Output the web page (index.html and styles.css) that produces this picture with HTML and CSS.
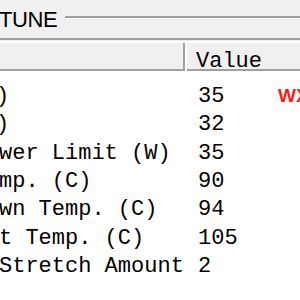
FILE: index.html
```html
<!DOCTYPE html>
<html>
<head>
<meta charset="utf-8">
<link rel="stylesheet" href="styles.css">
</head>
<body>
<div class="group">
  <div class="group-head">
    <span class="caption">TUNE</span>
    <span class="etch"></span>
  </div>
  <div class="list">
    <div class="list-header">
      <div class="hcell hcell-name"></div>
      <div class="hcell hcell-value">Value</div>
    </div>
    <div class="list-body">
      <div class="row"><span class="name name-paren">)</span><span class="value">35</span><span class="flag">WX</span></div>
      <div class="row"><span class="name name-paren">)</span><span class="value">32</span><span class="flag"></span></div>
      <div class="row"><span class="name">wer Limit (W)</span><span class="value">35</span><span class="flag"></span></div>
      <div class="row"><span class="name">mp. (C)</span><span class="value">90</span><span class="flag"></span></div>
      <div class="row"><span class="name">wn Temp. (C)</span><span class="value">94</span><span class="flag"></span></div>
      <div class="row"><span class="name">t Temp. (C)</span><span class="value">105</span><span class="flag"></span></div>
      <div class="row"><span class="name">Stretch Amount</span><span class="value">2</span><span class="flag"></span></div>
    </div>
  </div>
</div>
</body>
</html>
```
FILE: styles.css
```css
html, body {
  margin: 0;
  padding: 0;
}
body {
  width: 300px;
  height: 300px;
  overflow: hidden;
  background: #f0f0f0;
}
.group {
  display: flex;
  flex-direction: column;
  height: 300px;
}
.group-head {
  display: flex;
  align-items: flex-start;
  height: 38px;
}
.caption {
  font-family: "Liberation Sans", Arial, sans-serif;
  font-size: 22px;
  line-height: 22px;
  padding-top: 9px;
  margin-left: -1px;
  letter-spacing: -0.4px;
  color: #000;
}
.etch {
  flex: 1;
  margin-left: 8px;
  margin-top: 16px;
  height: 0;
  border-top: 2px solid #a0a0a0;
  border-bottom: 1px solid #ffffff;
}
.list {
  flex: 1;
  display: flex;
  flex-direction: column;
  border-top: 2px solid #a0a0a0;
  font-family: "Liberation Mono", "Courier New", monospace;
  font-size: 22px;
  color: #000;
}
.list-header {
  display: flex;
  border-top: 1px solid #f0f0f0;
  border-bottom: 2px solid #a0a0a0;
  box-shadow: inset 0 1px 0 #ffffff, inset 0 2px 0 #ffffff;
  height: 31px;
  box-sizing: border-box;
  padding-top: 2px;
}
.hcell {
  height: 29px;
  box-sizing: border-box;
}
.hcell-name {
  width: 185px;
  border-right: 2px solid #a0a0a0;
}
.hcell-value {
  flex: 1;
  border-left: 2px solid #ffffff;
  padding: 8px 0 0 9px;
  line-height: 22px;
}
.list-body {
  flex: 1;
  background: #ffffff;
  padding-top: 12px;
}
.row {
  display: grid;
  grid-template-columns: 189px 89px 1fr;
  height: 28.33px;
  line-height: 28.33px;
  white-space: nowrap;
}
.name {
  overflow: hidden;
  margin-left: -1px;
}
.name-paren {
  margin-left: -4px;
}
.value {
  padding-left: 9px;
}
.flag {
  font-family: "Liberation Sans", Arial, sans-serif;
  font-weight: bold;
  font-size: 19px;
  line-height: 26px;
  color: #ff1a1a;
}
```
